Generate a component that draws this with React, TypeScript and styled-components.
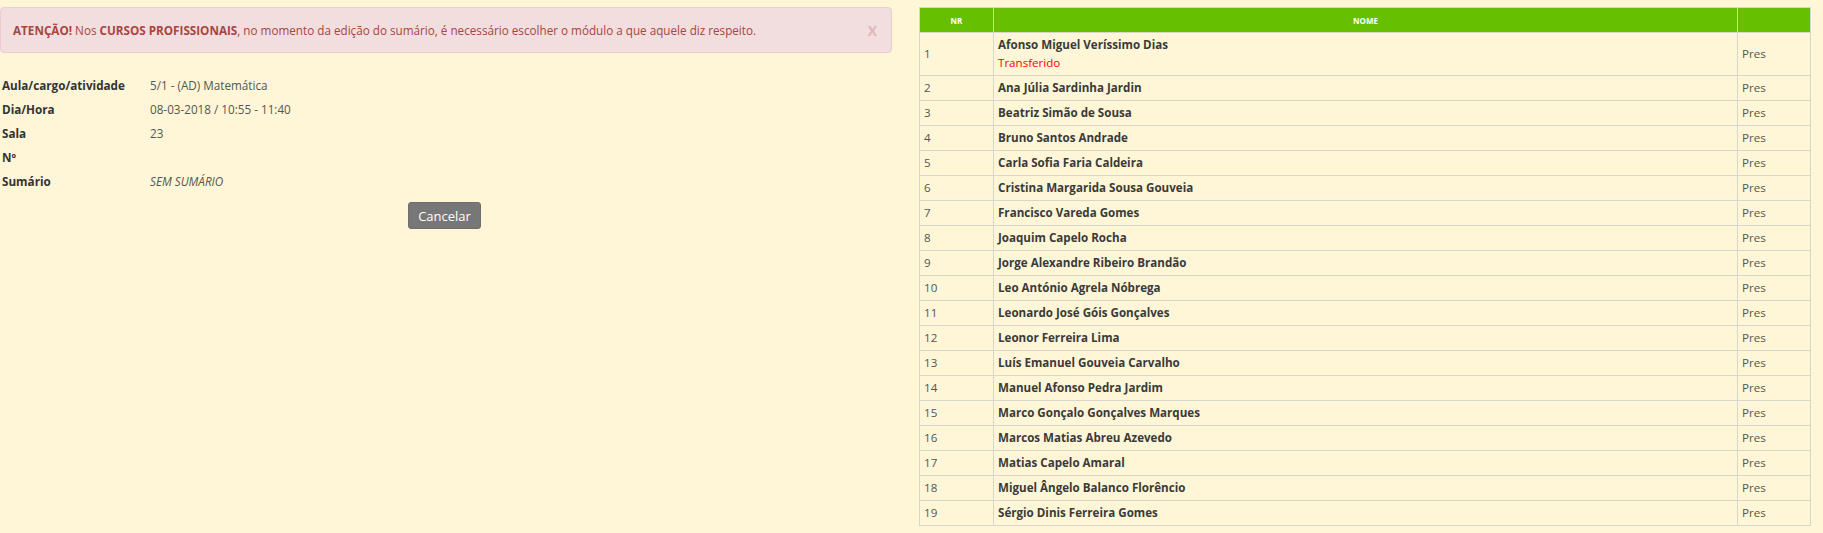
import React from "react";
import styled, { createGlobalStyle } from "styled-components";

const Global = createGlobalStyle`
  html, body { margin: 0; padding: 0; background: #fef6d6; }
  body { font-family: "Open Sans", "Noto Sans", sans-serif; color: #333; }
`;

const Page = styled.div`
  display: flex;
  align-items: flex-start;
  gap: 27px;
  padding: 7px 12px 0 0;
  width: 1823px;
  box-sizing: border-box;
`;

const LeftCol = styled.div`
  width: 892px;
  flex: none;
  display: flex;
  flex-direction: column;
`;

const Alert = styled.div`
  height: 46px;
  box-sizing: border-box;
  background: #f2dede;
  border: 1px solid #ebccd1;
  border-radius: 4px;
  color: #a94442;
  font-size: 11.7px;
  display: flex;
  align-items: center;
  justify-content: space-between;
  padding: 0 12px 0 12px;
  b { font-weight: 700; }
`;

const Close = styled.span`
  color: #e2b6b8;
  font-weight: 700;
  font-size: 14px;
  margin-right: 2px;
`;

const Info = styled.div`
  display: grid;
  grid-template-columns: 148px 1fr;
  margin-top: 20px;
  padding-left: 2px;
  font-size: 11.7px;
  line-height: 24px;
`;

const Label = styled.div`
  font-weight: 700;
  color: #333;
`;

const Value = styled.div<{ $italic?: boolean }>`
  color: #555;
  font-style: ${(p) => (p.$italic ? "italic" : "normal")};
  min-height: 24px;
`;

const ButtonRow = styled.div`
  display: flex;
  justify-content: center;
  margin-top: 9px;
`;

const Button = styled.button`
  background: #777;
  color: #fff;
  border: 1px solid #6e6e6e;
  border-radius: 3px;
  font-family: "Open Sans", sans-serif;
  font-size: 13px;
  height: 27px;
  width: 73px;
  padding: 0;
  margin-left: -3px;
`;

const Table = styled.table`
  width: 892px;
  flex: none;
  border-collapse: collapse;
  font-size: 11.6px;
`;

const Th = styled.th<{ $w?: number }>`
  background: #66bf00;
  color: #fff;
  font-size: 8px;
  font-weight: 700;
  height: 25px;
  padding: 0;
  border: 1px solid #d6d6cc;
  text-align: center;
  width: ${(p) => (p.$w ? `${p.$w}px` : "auto")};
  box-sizing: border-box;
`;

const Td = styled.td<{ $bold?: boolean }>`
  border: 1px solid #d6d6cc;
  padding: 3px 4px;
  line-height: 18px;
  color: ${(p) => (p.$bold ? "#3a3a3a" : "#555")};
  font-weight: ${(p) => (p.$bold ? 700 : 400)};
  vertical-align: middle;
`;

const Transfer = styled.div`
  color: #ff0000;
  font-weight: 400;
`;

const students = [
  "Afonso Miguel Veríssimo Dias",
  "Ana Júlia Sardinha Jardin",
  "Beatriz Simão de Sousa",
  "Bruno Santos Andrade",
  "Carla Sofia Faria Caldeira",
  "Cristina Margarida Sousa Gouveia",
  "Francisco Vareda Gomes",
  "Joaquim Capelo Rocha",
  "Jorge Alexandre Ribeiro Brandão",
  "Leo António Agrela Nóbrega",
  "Leonardo José Góis Gonçalves",
  "Leonor Ferreira Lima",
  "Luís Emanuel Gouveia Carvalho",
  "Manuel Afonso Pedra Jardim",
  "Marco Gonçalo Gonçalves Marques",
  "Marcos Matias Abreu Azevedo",
  "Matias Capelo Amaral",
  "Miguel Ângelo Balanco Florêncio",
  "Sérgio Dinis Ferreira Gomes",
];

export default function App() {
  return (
    <>
      <Global />
      <Page>
        <LeftCol>
          <Alert>
            <span>
              <b>ATENÇÃO!</b> Nos <b>CURSOS PROFISSIONAIS</b>, no momento da edição do sumário, é necessário escolher o módulo a que aquele diz respeito.
            </span>
            <Close>X</Close>
          </Alert>
          <Info>
            <Label>Aula/cargo/atividade</Label>
            <Value>5/1 - (AD) Matemática</Value>
            <Label>Dia/Hora</Label>
            <Value>08-03-2018 / 10:55 - 11:40</Value>
            <Label>Sala</Label>
            <Value>23</Value>
            <Label>Nº</Label>
            <Value></Value>
            <Label>Sumário</Label>
            <Value $italic>SEM SUMÁRIO</Value>
          </Info>
          <ButtonRow>
            <Button>Cancelar</Button>
          </ButtonRow>
        </LeftCol>
        <Table>
          <thead>
            <tr>
              <Th $w={74}>NR</Th>
              <Th $w={744}>NOME</Th>
              <Th></Th>
            </tr>
          </thead>
          <tbody>
            {students.map((s, i) => (
              <tr key={s}>
                <Td>{i + 1}</Td>
                <Td $bold>
                  {s}
                  {i === 0 && <Transfer>Transferido</Transfer>}
                </Td>
                <Td>Pres</Td>
              </tr>
            ))}
          </tbody>
        </Table>
      </Page>
    </>
  );
}
